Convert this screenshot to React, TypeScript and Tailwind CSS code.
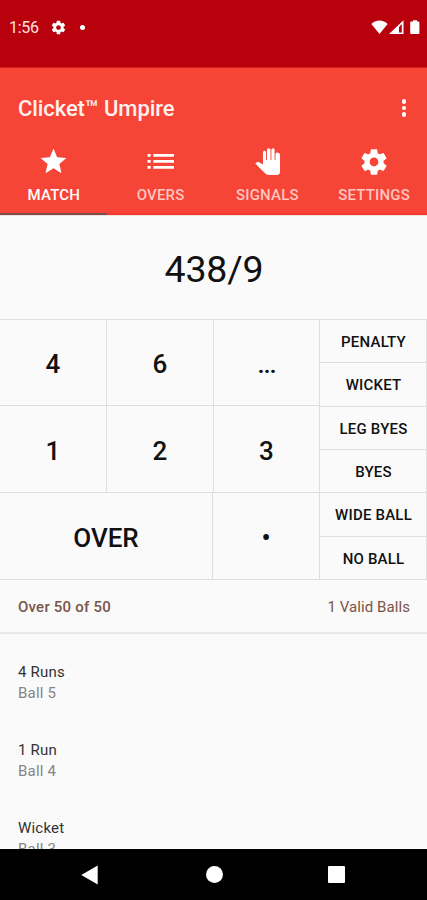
import React from "react";

const GEAR =
  "M19.14 12.94c.04-.3.06-.61.06-.94 0-.32-.02-.64-.07-.94l2.03-1.58c.18-.14.23-.41.12-.61l-1.92-3.32c-.12-.22-.37-.29-.59-.22l-2.39.96c-.5-.38-1.03-.7-1.62-.94l-.36-2.54c-.04-.24-.24-.41-.48-.41h-3.84c-.24 0-.43.17-.47.41l-.36 2.54c-.59.24-1.13.57-1.62.94l-2.39-.96c-.22-.08-.47 0-.59.22L2.74 8.87c-.12.21-.08.47.12.61l2.03 1.58c-.05.3-.07.63-.07.94s.02.64.07.94l-2.03 1.58c-.18.14-.23.41-.12.61l1.92 3.32c.12.22.37.29.59.22l2.39-.96c.5.38 1.03.7 1.62.94l.36 2.54c.05.24.24.41.48.41h3.84c.24 0 .44-.17.47-.41l.36-2.54c.59-.24 1.13-.56 1.62-.94l2.39.96c.22.08.47 0 .59-.22l1.92-3.32c.12-.22.07-.47-.12-.61l-2.01-1.58zM12 15.3c-1.820 0-3.300-1.480-3.300-3.300s1.480-3.300 3.300-3.300 3.300 1.480 3.300 3.300-1.480 3.300-3.300 3.300z";

function StarIcon() {
  return (
    <svg viewBox="0 0 24 24" className="size-[31px]" fill="currentColor">
      <path d="M12 17.27 18.18 21l-1.64-7.03L22 9.24l-7.19-.61L12 2 9.19 8.63 2 9.24l5.46 4.73L5.82 21z" />
    </svg>
  );
}

function ListIcon() {
  return (
    <svg viewBox="0 0 27 17" className="h-[17px] w-[27px]" fill="currentColor">
      <path d="M.5 1h3.200v2.700H.5zM.5 7h3.200v2.700H.5zM.5 13h3.200v2.700H.5zM6.300 1H27v2.700H6.300zM6.300 7H27v2.700H6.300zM6.300 13H27v2.700H6.300z" />
    </svg>
  );
}

function HandIcon() {
  return (
    <svg viewBox="0 0 25 27" className="ml-[2px] h-[27px] w-[25px]" fill="currentColor">
      <path d="M25 6v17.500q0 3.500-3.500 3.500h-7.500q-2.500 0-4-1.700L.3 15.500q1.400-2.200 3.400-1.400L8 16.500V4.300q0-1.500 1.500-1.500t1.500 1.500V12h.9V1.800q0-1.500 1.800-1.500t1.800 1.500V12h.9V1.800q0-1.500 1.600-1.500t1.600 1.500V12h.9V6q0-1.500 1.750-1.500T25 6z" />
    </svg>
  );
}

function GearIcon({ className }: { className: string }) {
  return (
    <svg viewBox="0 0 24 24" className={className} fill="currentColor">
      <path d={GEAR} />
    </svg>
  );
}

function StatusBar() {
  return (
    <div className="flex h-[68px] shrink-0 items-start justify-between border-b border-[#d81c1c] bg-[#b9000d] pr-[7px] pl-[9px] text-white">
      <div className="flex h-[55px] items-center">
        <span className="w-[31px] pt-[1px] text-[16px] tracking-[-0.3px] whitespace-nowrap text-[#ffe4e1]">1:56</span>
        <GearIcon className="ml-[10px] size-[17px]" />
        <span className="ml-[13px] size-[5px] rounded-full bg-white" />
      </div>
      <svg viewBox="0 0 50 16" className="mt-[19px] h-[16px] w-[50px]" fill="currentColor">
        <path d="M1.400 5C5.500.3 13.500.3 17.600 5L9.500 15z" />
        <path fillRule="evenodd" d="M19 15 33.500 1.200V15zM29 8v5.500h2.800V5z" />
        <path d="M41.200 2.500h1.800V1.200h4v1.300h1.500q.9 0 .9.900v10.700q0 .9-.9.900h-7.400q-.9 0-.9-.9V3.400q0-.9.9-.9z" />
      </svg>
    </div>
  );
}

function Tab({ icon, label, active }: { icon: React.ReactNode; label: string; active?: boolean }) {
  return (
    <button
      className={`flex flex-1 flex-col items-center border-b-2 ${
        active ? "border-[#7b4f48] text-white" : "border-[#f13b2f] text-[#ffc5bf]"
      }`}
    >
      <span className="flex h-[33px] items-center text-white">{icon}</span>
      <span className="mt-[7px] pl-[1px] text-[15px] leading-[20px] font-medium tracking-[0.200px]">{label}</span>
    </button>
  );
}

function Key({ label, className = "w-[107px]" }: { label: string; className?: string }) {
  return (
    <button
      className={`flex items-center justify-center border-r border-b border-[#dedede] pt-[4px] text-[26px] font-medium ${className}`}
    >
      {label}
    </button>
  );
}

const extras = ["PENALTY", "WICKET", "LEG BYES", "BYES", "WIDE BALL", "NO BALL"];

const balls = [
  { title: "4 Runs", ball: "Ball 5" },
  { title: "1 Run", ball: "Ball 4" },
  { title: "Wicket", ball: "Ball 3" },
];

export default function App() {
  return (
    <div className="flex h-[900px] w-[427px] flex-col overflow-hidden bg-[#fafafa] font-['Roboto',sans-serif] text-[#111]">
      <StatusBar />
      <header className="flex h-[147px] shrink-0 flex-col bg-[#f64436]">
        <div className="flex h-[77px] items-center justify-between pt-[3px] pr-[21px] pl-[18px]">
          <h1 className="pt-[1px] text-[22px] font-medium tracking-[-0.080px] whitespace-nowrap text-[#fff1ef]">Clicket™ Umpire</h1>
          <div className="flex flex-col gap-[2px]">
            <span className="size-[4.500px] rounded-full bg-white" />
            <span className="size-[4.500px] rounded-full bg-white" />
            <span className="size-[4.500px] rounded-full bg-white" />
          </div>
        </div>
        <nav className="flex flex-1">
          <Tab icon={<StarIcon />} label="MATCH" active />
          <Tab icon={<ListIcon />} label="OVERS" />
          <Tab icon={<HandIcon />} label="SIGNALS" />
          <Tab icon={<GearIcon className="size-[32px]" />} label="SETTINGS" />
        </nav>
      </header>

      <div className="flex h-[105px] shrink-0 items-center justify-center border-t border-b border-t-[#f0dcda] border-b-[#dedede] pt-[4px] pl-[1px] text-[37.500px] tracking-[-0.200px]">
        438/9
      </div>

      <main className="flex h-[260px] shrink-0">
        <div className="flex w-[320px] flex-col">
          <div className="flex h-[86px]">
            <Key label="4" />
            <Key label="6" />
            <Key label="..." className="w-[106px] tracking-[-1.200px]" />
          </div>
          <div className="flex h-[87px]">
            <Key label="1" />
            <Key label="2" />
            <Key label="3" className="w-[106px]" />
          </div>
          <div className="flex h-[87px]">
            <Key label="OVER" className="w-[213px]" />
            <Key label="•" />
          </div>
        </div>
        <div className="grid flex-1 grid-rows-6">
          {extras.map((label) => (
            <button key={label} className="flex items-center justify-center border-r border-b border-[#dedede] pt-[2px] pl-[1px] text-[15px] font-medium tracking-[0.200px]">
              {label}
            </button>
          ))}
        </div>
      </main>

      <div className="flex h-[54px] shrink-0 items-center justify-between border-b-2 border-[#e8e8e8] pt-[2px] pr-[17px] pl-[18px] text-[15px] text-[#795548]">
        <span className="font-medium tracking-[0.220px]">Over 50 of 50</span>
        <span className="tracking-[0.080px]">1 Valid Balls</span>
      </div>

      <ul className="flex min-h-0 flex-1 flex-col overflow-hidden pt-[28px]">
        {balls.map(({ title, ball }) => (
          <li key={ball} className="h-[78px] shrink-0 pl-[18px] text-[15px] leading-[21px] tracking-[0.200px]">
            <p className="text-[#333]">{title}</p>
            <p className="text-[#858585]">{ball}</p>
          </li>
        ))}
      </ul>

      <footer className="flex h-[51px] shrink-0 items-center bg-black pl-[81px]">
        <svg viewBox="0 0 17 20" className="h-[20px] w-[17px]" fill="white">
          <path d="M.3 10 16.700.5v19z" />
        </svg>
        <span className="ml-[108px] size-[16.500px] rounded-full bg-white" />
        <span className="ml-[105.500px] size-[17px] rounded-[1px] bg-white" />
      </footer>
    </div>
  );
}
